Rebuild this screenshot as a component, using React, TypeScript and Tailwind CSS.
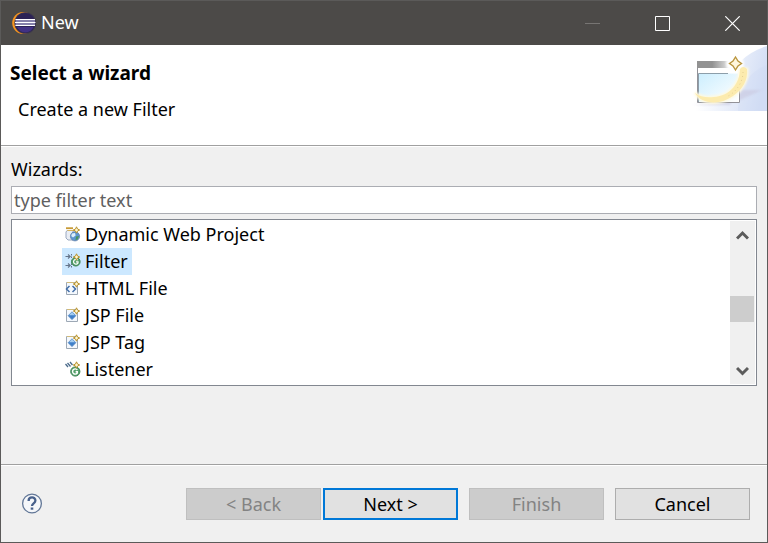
import React from "react";

type Kind = "web" | "filter" | "html" | "jsp" | "listener";

const wizards: { name: string; kind: Kind; selected?: boolean }[] = [
  { name: "Dynamic Web Project", kind: "web" },
  { name: "Filter", kind: "filter", selected: true },
  { name: "HTML File", kind: "html" },
  { name: "JSP File", kind: "jsp" },
  { name: "JSP Tag", kind: "jsp" },
  { name: "Listener", kind: "listener" },
];

function Sparkle() {
  return <path d="M11.5 0.8 L12.5 3 L14.7 4 L12.5 5 L11.5 7.2 L10.5 5 L8.3 4 L10.5 3 Z" fill="#fff6cf" stroke="#b8912c" strokeWidth="1" />;
}

function WizardIcon({ kind }: { kind: Kind }) {
  return (
    <svg width="16" height="16" viewBox="0 0 16 16" className="shrink-0" aria-hidden="true">
      {kind === "web" && (
        <>
          <path d="M1 2.2 H8" stroke="#c79a35" strokeWidth="1.8" />
          <path d="M2 4.5 H8 V14 H3 L1 12 V6 Z" fill="#e9edf4" stroke="#9ba9c0" />
          <path d="M2.5 4.5 H9" stroke="#d8b45e" />
          <circle cx="10" cy="10.3" r="4.6" fill="#5d96d0" stroke="#6481a8" strokeWidth="0.8" />
          <path d="M7 7.6 L10 7 L10.6 9.5 L8 11.5 L6.2 10 Z" fill="#dceefa" />
          <path d="M11 10.5 L14 10 L12.5 13.5 L10.5 14 Z" fill="#4b9659" />
        </>
      )}
      {kind === "filter" && (
        <>
          <path d="M0.5 3.5 H5 M3 1.5 L5.2 3.5 L3 5.5 M0.5 12.5 H5 M3 10.5 L5.2 12.5 L3 14.5" fill="none" stroke="#65758c" strokeWidth="1.1" />
          <path d="M6.5 1 V6 M6.5 10.5 V15" stroke="#65758c" strokeDasharray="1.5 1" />
          <circle cx="10.8" cy="8.7" r="4.3" fill="#55a16b" stroke="#3c8352" />
          <path d="M12.8 7.2 A2.4 2.4 0 1 0 13 10 V8.8 H11" fill="none" stroke="#fff" strokeWidth="1.2" />
        </>
      )}
      {(kind === "html" || kind === "jsp") && (
        <>
          <path d="M1.5 2.5 H12.5 V14.5 H1.5 Z" fill="#f4f8fd" stroke="#9da8b5" />
          <path d="M2 2.5 H9" stroke="#d1ba79" />
        </>
      )}
      {kind === "html" && (
        <path d="M4.5 6 L1.5 9 L4.5 12 M7.5 6 L10.5 9 L7.5 12" fill="none" stroke="#416da8" strokeWidth="1.5" />
      )}
      {kind === "jsp" && (
        <>
          <path d="M7 4.8 L10.8 8.7 L7 12.6 L3.2 8.7 Z" fill="#3f7fca" stroke="#4b80bd" strokeWidth="0.8" />
          <path d="M7 5 L10 8.3 H4 Z" fill="#a4cdf1" />
        </>
      )}
      {kind === "listener" && (
        <>
          <path d="M0.5 3 L3 6 M2.5 2 L5.5 5.5 M5 1 L7.5 4" stroke="#4b6b8b" strokeWidth="1.3" />
          <circle cx="10.3" cy="10.5" r="4.6" fill="#55a16b" stroke="#3c8352" />
          <path d="M12.3 9 A2.6 2.6 0 1 0 12.3 12 V10.8 H10.6" fill="none" stroke="#fff" strokeWidth="1.4" />
        </>
      )}
      <Sparkle />
    </svg>
  );
}

function EclipseLogo() {
  return (
    <svg width="24" height="24" viewBox="0 0 24 24" aria-hidden="true">
      <circle cx="11.2" cy="12" r="11" fill="#f7941e" />
      <circle cx="13.2" cy="12" r="10.8" fill="#3a3550" />
      <circle cx="13.2" cy="12" r="10" fill="#2c2255" />
      <path d="M5 16 H21.5 A9 9 0 0 1 5 16" fill="#413183" />
      <path d="M3.5 8 H23 V15 H3.5 Z" fill="#8580aa" />
      <path d="M3.5 8.5 H23 M3 11.5 H23.5 M3.5 14.5 H23" stroke="#fff" strokeWidth="1.1" />
    </svg>
  );
}

function WizardBanner() {
  return (
    <svg width="75" height="66" viewBox="0 0 75 66" aria-hidden="true">
      <defs>
        <linearGradient id="sky" x1="0" x2="1" y1="0.2" y2="0.4">
          <stop offset="0.2" stopColor="#fff" />
          <stop offset="1" stopColor="#d3def5" />
        </linearGradient>
        <linearGradient id="bar" x1="0" x2="1">
          <stop offset="0.4" stopColor="#929292" />
          <stop offset="1" stopColor="#fff" />
        </linearGradient>
        <linearGradient id="pane" x1="0" x2="1" y1="0" y2="1">
          <stop offset="0" stopColor="#cceefe" />
          <stop offset="1" stopColor="#fff" />
        </linearGradient>
        <filter id="soft" x="-30%" y="-30%" width="160%" height="160%">
          <feGaussianBlur stdDeviation="1.3" />
        </filter>
      </defs>
      <path d="M0 58 C28 58 35 12 75 1 V66 H0 Z" fill="url(#sky)" />
      <path d="M46 66 C46 42 58 26 75 20 V66 Z" fill="#cddaf4" opacity="0.35" />
      <path d="M0 60 H38 L50 45 H70 L46 56 Z" fill="#c9c8df" opacity="0.6" filter="url(#soft)" />
      <path d="M5.5 16.5 H47.5 V57.5 H5.5 Z" fill="#fff" stroke="#929298" />
      <path d="M5 16 H43 V23 H5 Z" fill="url(#bar)" />
      <path d="M6.5 28.5 H46 V56.5 H6.5 Z" fill="url(#pane)" />
      <path d="M6.5 57 V28.5 H36" fill="none" stroke="#8c9eaa" />
      <path d="M47.5 16 V44" stroke="#fff" strokeWidth="2" />
      <circle cx="43" cy="19" r="9" fill="#fff" filter="url(#soft)" />
      <path d="M3 48 C9 59 27 61 41 51 C51 44 56 35 55 24 L48 24 C48 38 38 51 22 52 C15 53 8 52 3 48 Z" fill="#fff1bd" stroke="#fff9df" strokeWidth="3" filter="url(#soft)" />
      <path d="M3 48 C9 59 27 61 41 51 C51 44 56 35 55 24 Q51 20 48 24 C48 38 38 51 22 52 C15 53 8 52 3 48 Z" fill="#fcebae" />
      <path d="M51 27 C51 39 42 49 34 52" stroke="#e5d094" strokeWidth="1" strokeDasharray="1 3" fill="none" />
      <path d="M43.5 12 L46 16 L49.5 18.5 L46 21 L43.5 25 L41 21 L37.5 18.5 L41 16 Z" fill="#fff6dc" stroke="#b9953e" strokeWidth="1.4" />
    </svg>
  );
}

const button = "h-8 w-[135px] border text-lg leading-6";

export default function App() {
  return (
    <div className="flex min-h-screen flex-col border border-[#5b5a59] bg-[#f0f0f0] font-['Noto_Sans','Open_Sans',sans-serif] text-lg leading-6 text-black">
      <div className="flex h-11 items-center bg-[#4c4a48] text-white">
        <div className="flex flex-1 items-center gap-[5px] pl-[11px]">
          <EclipseLogo />
          <span className="pb-[2px]">New</span>
        </div>
        <button aria-label="Minimize" disabled className="flex h-full w-[70px] items-center justify-center">
          <svg width="15" height="15" viewBox="0 0 15 15"><path d="M0 7.5 H15" stroke="#777573" /></svg>
        </button>
        <button aria-label="Maximize" className="flex h-full w-[70px] items-center justify-center">
          <svg width="15" height="15" viewBox="0 0 15 15"><path d="M0.5 0.5 H14.5 V14.5 H0.5 Z" fill="none" stroke="#fff" /></svg>
        </button>
        <button aria-label="Close" className="flex h-full w-[70px] items-center justify-center">
          <svg width="15" height="15" viewBox="0 0 15 15"><path d="M0.3 0.3 L14.7 14.7 M14.7 0.3 L0.3 14.7" stroke="#fff" strokeWidth="1.2" /></svg>
        </button>
      </div>

      <header className="flex h-[101px] items-start justify-between border-b border-[#a0a0a0] bg-white">
        <div className="pt-4 pl-[9px]">
          <h1 className="text-[19px] font-bold">Select a wizard</h1>
          <p className="pt-3 pl-2">Create a new Filter</p>
        </div>
        <WizardBanner />
      </header>

      <main className="flex flex-1 flex-col border-t border-white px-[10px] pt-[10px]">
        <label htmlFor="filter">Wizards:</label>
        <input
          id="filter"
          type="text"
          placeholder="type filter text"
          className="mt-[5px] h-7 w-full border border-[#abadb3] bg-white px-[2px] outline-none placeholder:text-[#606060] placeholder:opacity-100"
        />
        <div className="mt-[5px] flex justify-between border border-[#828790] bg-white p-px">
          <ul className="flex flex-col items-start pb-px pl-[49px]">
            {wizards.map((w) => (
              <li key={w.name}>
                <button className={w.selected ? "flex h-[27px] items-center gap-1 bg-[#cce8ff] pr-1 pb-[2px] pl-[3px]" : "flex h-[27px] items-center gap-1 pr-1 pb-[2px] pl-[3px]"}>
                  <WizardIcon kind={w.kind} />
                  <span>{w.name}</span>
                </button>
              </li>
            ))}
          </ul>
          <div className="flex w-[25px] flex-col justify-between bg-[#f0f0f0]">
            <button aria-label="Scroll up" className="flex h-[27px] w-full items-center justify-center">
              <svg width="13" height="12" viewBox="0 0 13 12"><path d="M1 9.5 L6.5 4 L12 9.5" fill="none" stroke="#5c5c5c" strokeWidth="3" /></svg>
            </button>
            <div className="mt-3 h-[26px] w-6 bg-[#cdcdcd]" />
            <button aria-label="Scroll down" className="flex h-[27px] w-full items-center justify-center">
              <svg width="13" height="12" viewBox="0 0 13 12"><path d="M1 3 L6.5 8.5 L12 3" fill="none" stroke="#5c5c5c" strokeWidth="3" /></svg>
            </button>
          </div>
        </div>
      </main>

      <footer className="border-t border-[#a0a0a0]">
        <div className="flex items-center justify-between border-t border-white pt-[22px] pr-[17px] pb-[22px] pl-5">
          <button aria-label="Help" className="h-[22px] w-[22px]">
            <svg width="22" height="22" viewBox="0 0 22 22">
              <circle cx="11" cy="10.5" r="9.4" fill="#f5f7fa" stroke="#627797" strokeWidth="1.3" />
              <path d="M7.6 7.9 C7.6 3.3 14.4 3.5 14.4 7.5 C14.4 10.3 11 10.3 11 12.9" fill="none" stroke="#48618c" strokeWidth="2.3" />
              <path d="M9.7 14.5 H12.3 V16.7 H9.7 Z" fill="#48618c" />
            </svg>
          </button>
          <div className="flex gap-[11px]">
            <div className="flex gap-[2px]">
              <button disabled className={`${button} border-[#bfbfbf] bg-[#cccccc] text-[#838383]`}>&lt; Back</button>
              <button className={`${button} border-[#0078d7] bg-[#e1e1e1] inset-ring inset-ring-[#0078d7]`}>Next &gt;</button>
            </div>
            <button disabled className={`${button} border-[#bfbfbf] bg-[#cccccc] text-[#838383]`}>Finish</button>
            <button className={`${button} border-[#adadad] bg-[#e1e1e1]`}>Cancel</button>
          </div>
        </div>
      </footer>
    </div>
  );
}
